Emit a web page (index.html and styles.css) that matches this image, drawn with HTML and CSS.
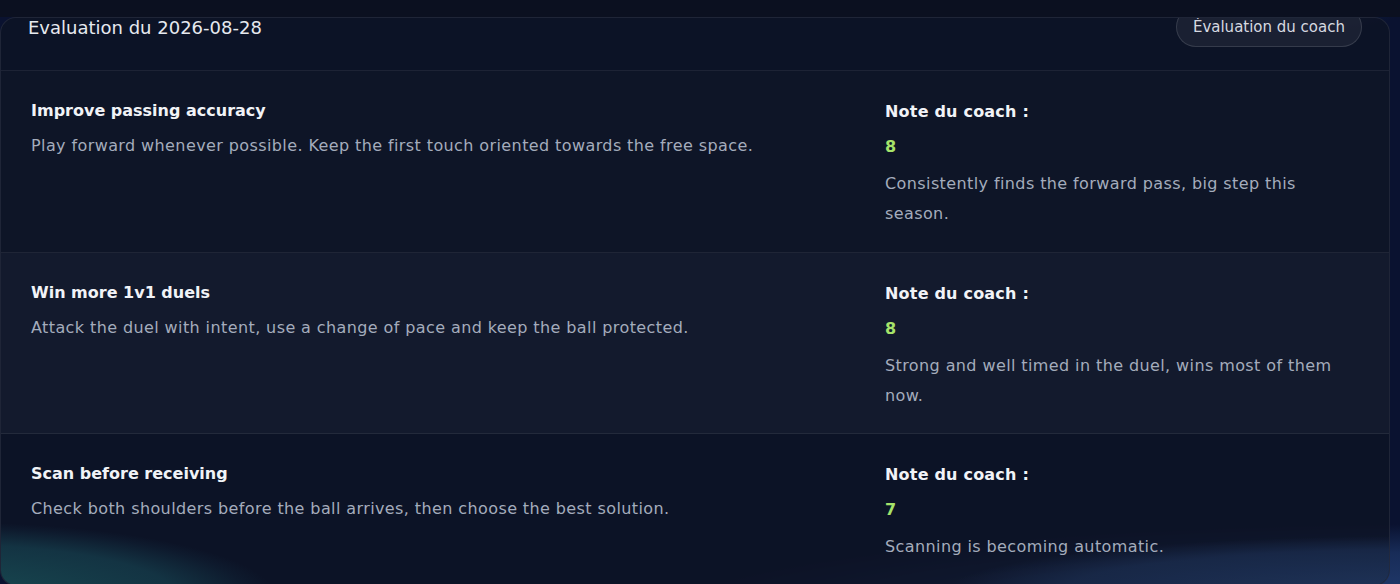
FILE: index.html
```html
<!DOCTYPE html>
<html lang="fr">
<head>
    <meta charset="UTF-8">
    <meta name="viewport" content="width=device-width, initial-scale=1.0">
    <title>Evaluation</title>
    <link rel="stylesheet" href="styles.css">
</head>
<body>
    <div class="card">
        <div class="card-head">
            <h2 class="card-title">Evaluation du 2026-08-28</h2>
            <button class="pill-btn">Évaluation du coach</button>
        </div>

        <div class="goal">
            <div class="goal-main">
                <h3 class="goal-title">Improve passing accuracy</h3>
                <p class="goal-desc">Play forward whenever possible. Keep the first touch oriented towards the free space.</p>
            </div>
            <div class="goal-note">
                <h4 class="note-label">Note du coach :</h4>
                <div class="note-score">8</div>
                <p class="note-text">Consistently finds the forward pass, big step this season.</p>
            </div>
        </div>

        <div class="goal alt">
            <div class="goal-main">
                <h3 class="goal-title">Win more 1v1 duels</h3>
                <p class="goal-desc">Attack the duel with intent, use a change of pace and keep the ball protected.</p>
            </div>
            <div class="goal-note">
                <h4 class="note-label">Note du coach :</h4>
                <div class="note-score">8</div>
                <p class="note-text">Strong and well timed in the duel, wins most of them now.</p>
            </div>
        </div>

        <div class="goal">
            <div class="goal-main">
                <h3 class="goal-title">Scan before receiving</h3>
                <p class="goal-desc">Check both shoulders before the ball arrives, then choose the best solution.</p>
            </div>
            <div class="goal-note">
                <h4 class="note-label">Note du coach :</h4>
                <div class="note-score">7</div>
                <p class="note-text">Scanning is becoming automatic.</p>
            </div>
        </div>
    </div>
</body>
</html>
```

FILE: styles.css
```css
html, body {
    height: 100%;
}
body {
    margin: 0;
    overflow: hidden;
    font-family: "DejaVu Sans", Verdana, sans-serif;
    color: #e5e7eb;
    background-color: #0a1230;
    background-image:
        linear-gradient(#0b1020, #0b1020 17px, transparent 17px),
        radial-gradient(ellipse 180px 50px at 92% 0%, rgba(40, 110, 120, 0.3), transparent 70%),
        radial-gradient(ellipse 800px 95px at 104% 106%, rgba(40, 70, 125, 0.9) 0%, rgba(30, 55, 105, 0.7) 70%, transparent 100%);
}
.card {
    margin: 17px 10px 0 0;
    border: 1px solid rgba(255, 255, 255, 0.08);
    border-radius: 16px;
    overflow: hidden;
    background: rgba(13, 19, 37, 0.82);
}
.card-head {
    display: flex;
    justify-content: space-between;
    align-items: flex-start;
    height: 52px;
    padding: 0 27px 0 27px;
    border-bottom: 1px solid rgba(255, 255, 255, 0.07);
}
.card-title {
    margin: 0;
    font-size: 18px;
    font-weight: normal;
    line-height: 20px;
    color: #e6e9ef;
}
.pill-btn {
    height: 40px;
    margin-top: -11px;
    padding: 0 16px;
    border: 1px solid rgba(255, 255, 255, 0.12);
    border-radius: 20px;
    background: rgba(255, 255, 255, 0.06);
    color: #d6d9e0;
    font-family: inherit;
    font-size: 15px;
}
.goal {
    display: grid;
    grid-template-columns: 1fr 476px;
    column-gap: 30px;
    padding: 30px 28px 22.5px 30px;
    border-bottom: 1px solid rgba(255, 255, 255, 0.07);
    background: rgba(18, 25, 42, 0.45);
}
.goal.alt {
    background: rgba(26, 34, 52, 0.5);
}
.goal:last-child {
    border-bottom: none;
    background-color: transparent;
    background-image:
        radial-gradient(ellipse 330px 75px at -4% 108%, rgba(34, 120, 118, 0.55) 0%, rgba(30, 100, 110, 0.4) 70%, rgba(30, 90, 110, 0.1) 92%, transparent 100%),
        radial-gradient(ellipse 470px 55px at 102% 104%, rgba(40, 68, 115, 0.6) 0%, rgba(34, 58, 100, 0.45) 75%, transparent 100%);
}
.goal-title, .note-label {
    margin: 0;
    font-size: 16px;
    font-weight: bold;
    line-height: 20px;
    color: #f1f3f7;
}
.note-label {
    margin-top: 1px;
    letter-spacing: 0.2px;
}
.goal-desc {
    margin: 15px 0 0;
    font-size: 16px;
    letter-spacing: 0.4px;
    line-height: 20px;
    color: #a4acbc;
}
.note-score {
    margin-top: 15px;
    font-size: 16px;
    font-weight: bold;
    line-height: 20px;
    color: #a6e36a;
}
.note-text {
    margin: 12px 0 0;
    font-size: 16px;
    letter-spacing: 0.4px;
    line-height: 30px;
    color: #a4acbc;
}
```
